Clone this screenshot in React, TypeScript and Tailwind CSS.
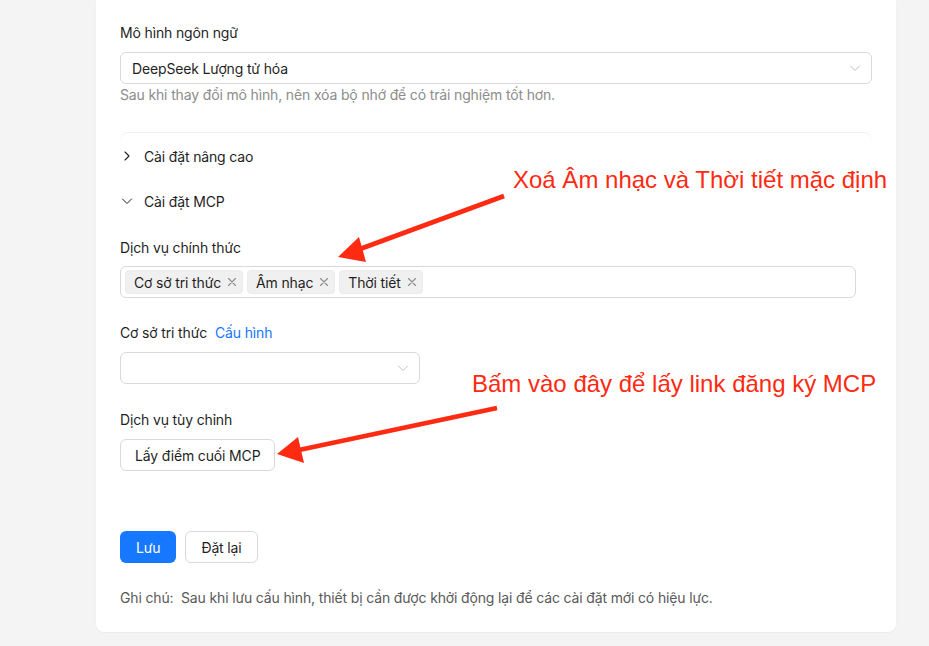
import React from "react";

const font = { fontFamily: "Inter, 'Noto Sans', sans-serif", letterSpacing: "-0.15px" };

function ChevronDown({ className = "" }: { className?: string }) {
  return (
    <svg className={className} width="12" height="12" viewBox="0 0 12 12" fill="none">
      <path d="M1.5 4l4.5 4.5L10.5 4" stroke="currentColor" strokeWidth="1" strokeLinecap="round" strokeLinejoin="round" />
    </svg>
  );
}

function ChevronRight({ className = "" }: { className?: string }) {
  return (
    <svg className={className} width="12" height="12" viewBox="0 0 12 12" fill="none">
      <path d="M4 2l4 4-4 4" stroke="currentColor" strokeWidth="1.1" strokeLinecap="round" strokeLinejoin="round" />
    </svg>
  );
}

function Close() {
  return (
    <svg width="10" height="10" viewBox="0 0 10 10" fill="none">
      <path d="M1.5 1.5l7 7M8.5 1.5l-7 7" stroke="#8c8c8c" strokeWidth="1.1" strokeLinecap="round" />
    </svg>
  );
}

function Tag({ label }: { label: string }) {
  return (
    <span className="flex h-[24px] items-center gap-[6px] rounded-[4px] border border-[#ececec] bg-[#f0f0f0] pl-[8px] pr-[5px] text-[14px] text-[#1f1f1f]">
      {label}
      <Close />
    </span>
  );
}

export default function App() {
  return (
    <div className="relative min-h-[646px] w-full overflow-hidden bg-[#f4f4f4]" style={font}>
      <div className="ml-[96px] w-[800px] rounded-b-[8px] bg-white px-[24px] pb-[23px] pt-[22px] shadow-[0_1px_2px_rgba(0,0,0,0.04)]">
        <div className="text-[14px] leading-[22px] text-[#1f1f1f]">Mô hình ngôn ngữ</div>
        <div className="mt-[8px] flex h-[32px] items-center justify-between rounded-[6px] border border-[#d9d9d9] pl-[11px] pr-[10px] text-[14px] text-[#1f1f1f]">
          <span>DeepSeek Lượng tử hóa</span>
          <ChevronDown className="text-[#bfbfbf]" />
        </div>
        <div className="text-[14px] leading-[22px] text-[#8c8c8c]">
          Sau khi thay đổi mô hình, nên xóa bộ nhớ để có trải nghiệm tốt hơn.
        </div>

        <div className="mt-[26px] rounded-t-[8px] border-t border-[#f0f0f0]">
          <div className="flex h-[46px] items-center text-[14px] text-[#1f1f1f]">
            <ChevronRight className="ml-[1px] text-[#1f1f1f]" />
            <span className="ml-[11px]">Cài đặt nâng cao</span>
          </div>
          <div className="flex h-[44px] items-center text-[14px] text-[#1f1f1f]">
            <ChevronDown className="ml-[1px] text-[#1f1f1f]" />
            <span className="ml-[11px]">Cài đặt MCP</span>
          </div>
          <div className="pr-[16px] pt-[14px]">
            <div className="text-[14px] leading-[22px] text-[#1f1f1f]">Dịch vụ chính thức</div>
            <div className="mt-[7px] flex h-[32px] items-center gap-[4px] rounded-[6px] border border-[#d9d9d9] px-[4px]">
              <Tag label="Cơ sở tri thức" />
              <Tag label="Âm nhạc" />
              <Tag label="Thời tiết" />
            </div>

            <div className="mt-[24px] flex gap-[8px] text-[14px] leading-[22px]">
              <span className="text-[#1f1f1f]">Cơ sở tri thức</span>
              <span className="text-[#1677ff]">Cấu hình</span>
            </div>
            <div className="mt-[8px] flex h-[32px] w-[300px] items-center justify-end rounded-[6px] border border-[#d9d9d9] pr-[10px]">
              <ChevronDown className="text-[#bfbfbf]" />
            </div>

            <div className="mt-[25px] text-[14px] leading-[22px] text-[#1f1f1f]">Dịch vụ tùy chỉnh</div>
            <button className="mt-[8px] flex h-[32px] items-center rounded-[6px] border border-[#d9d9d9] bg-white px-[14px] text-[14px] text-[#1f1f1f]">
              Lấy điểm cuối MCP
            </button>
          </div>
        </div>

        <div className="mt-[60px] flex gap-[9px]">
          <button className="flex h-[32px] items-center rounded-[6px] bg-[#1677ff] px-[16px] text-[14px] text-white">
            Lưu
          </button>
          <button className="flex h-[32px] items-center rounded-[6px] border border-[#d9d9d9] bg-white px-[15px] text-[14px] text-[#1f1f1f]">
            Đặt lại
          </button>
        </div>

        <div className="mt-[24px] text-[14px] leading-[22px] text-[#595959]">
          Ghi chú:&nbsp; Sau khi lưu cấu hình, thiết bị cần được khởi động lại để các cài đặt mới có hiệu lực.
        </div>
      </div>

      <div
        className="absolute left-[513px] top-[168px] whitespace-nowrap text-[24px] leading-[24px] text-[#ff2a12]"
        style={{ fontFamily: "'Liberation Sans', Arial, sans-serif", letterSpacing: "0px" }}
      >
        Xoá Âm nhạc và Thời tiết mặc định
      </div>
      <div
        className="absolute left-[472px] top-[372px] whitespace-nowrap text-[24px] leading-[24px] text-[#ff2a12]"
        style={{ fontFamily: "'Liberation Sans', Arial, sans-serif", letterSpacing: "0px" }}
      >
        Bấm vào đây để lấy link đăng ký MCP
      </div>

      <svg className="pointer-events-none absolute left-0 top-0" width="929" height="646" viewBox="0 0 929 646">
        <line x1="504" y1="196" x2="360" y2="249" stroke="#ff2a12" strokeWidth="5" />
        <polygon points="338,257 359,237 366,262" fill="#ff2a12" />
        <line x1="497" y1="408" x2="299" y2="450" stroke="#ff2a12" strokeWidth="4.5" />
        <polygon points="277,454 298,437 304,463" fill="#ff2a12" />
      </svg>
    </div>
  );
}
